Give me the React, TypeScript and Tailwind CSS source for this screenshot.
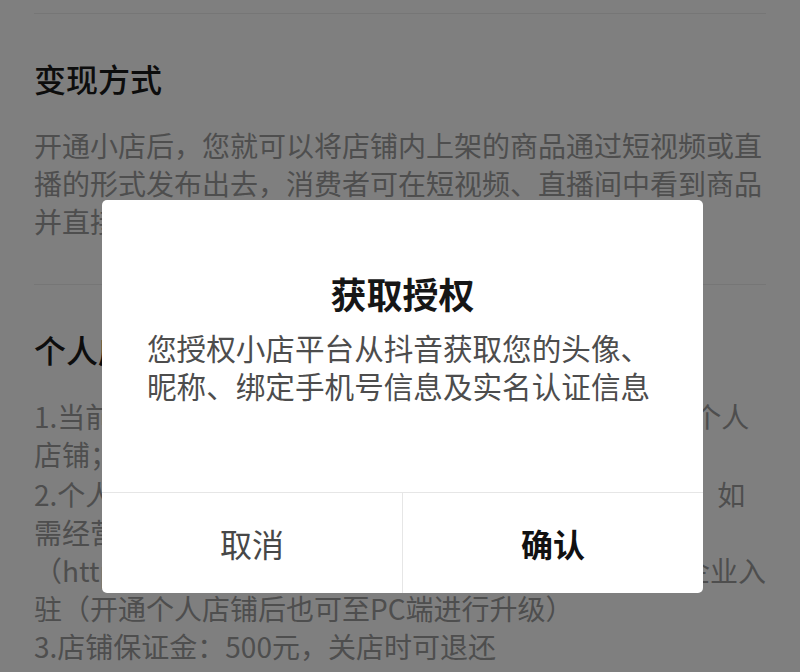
import React from "react";

const font = { fontFamily: '"Noto Sans CJK SC", "Noto Sans", sans-serif' };

export default function App() {
  return (
    <div
      className="relative w-[800px] h-[672px] overflow-hidden bg-white"
      style={font}
    >
      {/* Page content */}
      <div className="px-[34px] pt-[13px]">
        <div className="border-t border-[#ececec]" />
        <section className="pt-[44px] pb-[44px]">
          <h2 className="text-[32px] leading-[40px] font-medium text-[#1a1a1a]">
            变现方式
          </h2>
          <p className="mt-[28px] text-[28px] leading-[38px] text-[#9c9c9c]">
            开通小店后，您就可以将店铺内上架的商品通过短视频或直播的形式发布出去，消费者可在短视频、直播间中看到商品并直接在抖音内下单购买。
          </p>
        </section>
        <div className="border-t border-[#ececec]" />
        <section className="pt-[44px]">
          <h2 className="text-[32px] leading-[40px] font-medium text-[#1a1a1a]">
            个人店铺说明
          </h2>
          <div className="mt-[28px] text-[28px] leading-[38px] text-[#9c9c9c] whitespace-nowrap">
            <div className="flex">
              <span>1.当前开通的是个人店铺，您仅需实名认证即可开通</span>
              <span className="ml-[20px]">个人</span>
            </div>
            <div>店铺；</div>
            <div className="mt-[2px] flex">
              <span>2.个人店铺可经营的类目与企业店铺存在一定差异，</span>
              <span className="ml-[44px]">如</span>
            </div>
            <div>需经营更多类目，请前往抖店官网</div>
            <div className="flex justify-between">
              <span>（https://fxg.jinritemai.com）进行</span>
              <span>企业入</span>
            </div>
            <div>驻（开通个人店铺后也可至PC端进行升级）</div>
            <div>3.店铺保证金：500元，关店时可退还</div>
          </div>
        </section>
      </div>

      {/* Overlay */}
      <div className="absolute inset-0 bg-black/50" />

      {/* Dialog */}
      <div className="absolute left-[102px] top-[200px] w-[601px] rounded-[5px] bg-white overflow-hidden">
        <div className="h-[292px] px-[45px] pt-[68px]">
          <h3 className="text-center text-[36px] leading-[50px] font-semibold text-[#161616]">
            获取授权
          </h3>
          <p className="mt-[11px] text-[29.6px] leading-[38px] text-[#4d4d4d]">
            您授权小店平台从抖音获取您的头像、昵称、绑定手机号信息及实名认证信息
          </p>
        </div>
        <div className="flex h-[101px] border-t border-[#e6e6e6]">
          <button className="flex-1 flex items-center justify-center text-[32px] text-[#474747]">
            取消
          </button>
          <div className="w-px bg-[#e6e6e6]" />
          <button className="flex-1 flex items-center justify-center text-[32px] font-bold text-[#111111]">
            确认
          </button>
        </div>
      </div>
    </div>
  );
}
